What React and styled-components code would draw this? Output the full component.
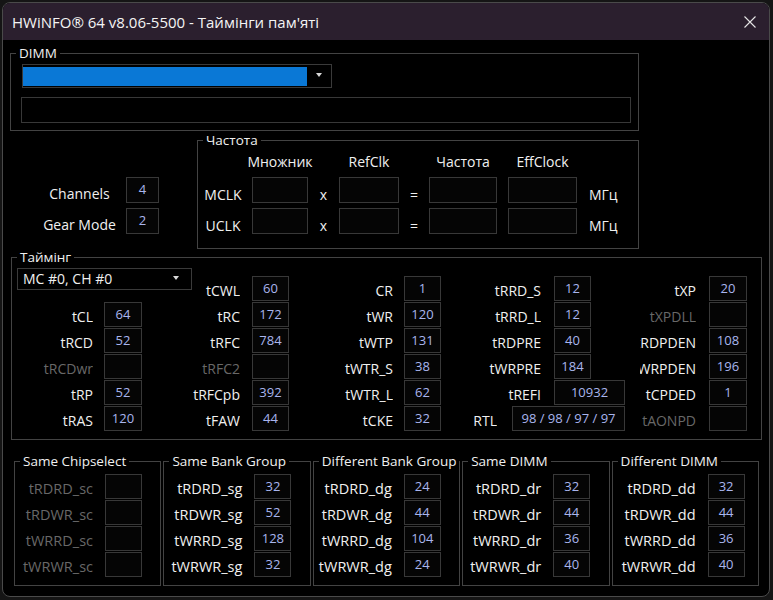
import styled, { createGlobalStyle } from "styled-components";

const GlobalStyle = createGlobalStyle`
  html, body {
    margin: 0;
    padding: 0;
    background: #151515;
  }
  body {
    font-family: "Open Sans", "Noto Sans", sans-serif;
    color: #f0f0f0;
  }
  * {
    box-sizing: border-box;
  }
`;

// top timing block: [label, value, dim, extra]
const timingCols = [
  { labelW: 81, gap: 11, boxW: 38, pad: 0 },
  { labelW: 98, gap: 12, boxW: 37, pad: 0 },
  { labelW: 104, gap: 11, boxW: 37, pad: 0 },
  { labelW: 100, gap: 13, boxW: 37, pad: 0 },
  { labelW: 56, gap: 13, boxW: 38, pad: 15 },
];

const timingRows = [
  [null, ["tCWL", "60"], ["CR", "1"], ["tRRD_S", "12"], ["tXP", "20"]],
  [["tCL", "64"], ["tRC", "172"], ["tWR", "120"], ["tRRD_L", "12"], ["tXPDLL", "", true]],
  [["tRCD", "52"], ["tRFC", "784"], ["tWTP", "131"], ["tRDPRE", "40"], ["tRDPDEN", "108"]],
  [["tRCDwr", "", true], ["tRFC2", "", true], ["tWTR_S", "38"], ["tWRPRE", "184"], ["tWRPDEN", "196"]],
  [["tRP", "52"], ["tRFCpb", "392"], ["tWTR_L", "62"], ["tREFI", "10932", false, { boxW: 71 }], ["tCPDED", "1"]],
  [["tRAS", "120"], ["tFAW", "44"], ["tCKE", "32"], ["RTL", "98 / 98 / 97 / 97", false, { labelW: 56, gap: 15, boxW: 113 }], ["tAONPD", "", true]],
];

const groups = [
  { title: "Same Chipselect", labelW: 78, dim: true, rows: [["tRDRD_sc", ""], ["tRDWR_sc", ""], ["tWRRD_sc", ""], ["tWRWR_sc", ""]] },
  { title: "Same Bank Group", labelW: 78, rows: [["tRDRD_sg", "32"], ["tRDWR_sg", "52"], ["tWRRD_sg", "128"], ["tWRWR_sg", "32"]] },
  { title: "Different Bank Group", labelW: 78, rows: [["tRDRD_dg", "24"], ["tRDWR_dg", "44"], ["tWRRD_dg", "104"], ["tWRWR_dg", "24"]] },
  { title: "Same DIMM", labelW: 78, rows: [["tRDRD_dr", "32"], ["tRDWR_dr", "44"], ["tWRRD_dr", "36"], ["tWRWR_dr", "40"]] },
  { title: "Different DIMM", labelW: 83, rows: [["tRDRD_dd", "32"], ["tRDWR_dd", "44"], ["tWRRD_dd", "36"], ["tWRWR_dd", "40"]] },
];

const DropArrow = () => (
  <svg width="6" height="4" viewBox="0 0 6 4">
    <path d="M0 0 H6 L3 4 Z" fill="#d8d8d8" />
  </svg>
);

export default function App() {
  return (
    <>
      <GlobalStyle />
      <Window>
        <TitleBar>
          <Title>HWiNFO® 64 v8.06-5500 - Таймінги пам'яті</Title>
          <CloseBtn>
            <svg width="12" height="12" viewBox="0 0 12 12">
              <path d="M0.5 0.5 L11.5 11.5 M11.5 0.5 L0.5 11.5" stroke="#e4e4e4" strokeWidth="1.1" />
            </svg>
          </CloseBtn>
        </TitleBar>

        <Body>
          <Group $w={629} $h={86}>
            <Legend>DIMM</Legend>
            <DimmInner>
              <DimmCombo>
                <Selected />
                <ArrowSlot>
                  <DropArrow />
                </ArrowSlot>
              </DimmCombo>
              <TextBox />
            </DimmInner>
          </Group>

          <MidRow>
            <InfoCol>
              <InfoLabel>Channels</InfoLabel>
              <Value $w={33} $h={26}>4</Value>
              <InfoLabel>Gear Mode</InfoLabel>
              <Value $w={33} $h={26}>2</Value>
            </InfoCol>

            <Group $w={442} $h={117}>
              <Legend>Частота</Legend>
              <FreqGrid>
                <HeadText $col={2}>Множник</HeadText>
                <HeadText $col={4}>RefClk</HeadText>
                <HeadText $col={6}>Частота</HeadText>
                <HeadText $col={8}>EffClock</HeadText>
                {["MCLK", "UCLK"].map((name, i) => (
                  <FreqRow key={name} $row={i + 2}>
                    <FreqText $col={1} $center>{name}</FreqText>
                    <FreqBox $col={2} />
                    <FreqText $col={3} $center>x</FreqText>
                    <FreqBox $col={4} />
                    <FreqText $col={5} $center>=</FreqText>
                    <FreqBox $col={6} />
                    <FreqBox $col={8} />
                    <FreqText $col={10}>МГц</FreqText>
                  </FreqRow>
                ))}
              </FreqGrid>
            </Group>
          </MidRow>

          <Group $w={751} $h={191} $ml={1}>
            <Legend>Таймінг</Legend>
            <TimingGrid>
              <McCombo>
                <span>MC #0, CH #0</span>
                <DropArrow />
              </McCombo>
              {timingRows.map((row, r) =>
                row.map((cell, c) => {
                  if (!cell) return null;
                  const [label, value, dim, over] = cell;
                  const col = { ...timingCols[c], ...(over || {}) };
                  return (
                    <TCell key={label} $col={c + 1} $row={r + 2} $pad={col.pad}>
                      <TLabel $w={col.labelW} $gap={col.gap} $dim={dim}>
                        <span>{label}</span>
                      </TLabel>
                      <Value $w={col.boxW} $h={25}>{value}</Value>
                    </TCell>
                  );
                })
              )}
            </TimingGrid>
          </Group>

          <BottomRow>
            {groups.map((g) => (
              <Group key={g.title} $h={133}>
                <Legend>{g.title}</Legend>
                <PairGrid $labelW={g.labelW}>
                  {g.rows.map(([label, value]) => (
                    <Pair key={label}>
                      <PairLabel $dim={g.dim}>{label}</PairLabel>
                      <Value $w={37} $h={25}>{value}</Value>
                    </Pair>
                  ))}
                </PairGrid>
              </Group>
            ))}
          </BottomRow>
        </Body>
      </Window>
    </>
  );
}

const Window = styled.div`
  margin: 2px 0 0 2px;
  width: 768px;
  height: 595px;
  border: 1px solid #4a4a4a;
  border-radius: 8px;
  background: #000;
  overflow: hidden;
  display: flex;
  flex-direction: column;
`;

const TitleBar = styled.div`
  flex: none;
  height: 37px;
  display: flex;
  align-items: center;
  justify-content: space-between;
  background: #2b1f2e;
  padding-left: 9px;
`;

const Title = styled.div`
  font-size: 15px;
  color: #f4f4f4;
  white-space: nowrap;
`;

const CloseBtn = styled.div`
  width: 38px;
  height: 37px;
  display: flex;
  align-items: center;
  justify-content: center;
`;

const Body = styled.div`
  padding: 5px 0 0 7px;
`;

const Group = styled.fieldset`
  margin: 0 0 0 ${(p) => p.$ml || 0}px;
  padding: 0;
  min-width: 0;
  border: 1px solid #434343;
  width: ${(p) => (p.$w ? `${p.$w}px` : "auto")};
  height: ${(p) => p.$h}px;
`;

const Legend = styled.legend`
  margin-left: 5px;
  padding: 0 3px;
  font-size: 13.5px;
  line-height: 16px;
  color: #f0f0f0;
  white-space: nowrap;
`;

const DimmInner = styled.div`
  padding: 3px 0 0 11px;
`;

const DimmCombo = styled.div`
  width: 310px;
  height: 24px;
  border: 1px solid #3a3a3a;
  display: flex;
  padding: 2px 0 1px 0;
`;

const Selected = styled.div`
  width: 284px;
  background: #0a78d6;
`;

const ArrowSlot = styled.div`
  flex: 1;
  display: flex;
  align-items: center;
  justify-content: center;
  padding-bottom: 3px;
`;

const TextBox = styled.div`
  margin: 9px 0 0 -1px;
  width: 610px;
  height: 26px;
  border: 1px solid #383838;
`;

const MidRow = styled.div`
  display: flex;
  margin-top: 1px;
`;

const InfoCol = styled.div`
  width: 187px;
  padding: 45px 0 0 30px;
  display: grid;
  grid-template-columns: 79px 33px;
  grid-auto-rows: 26px;
  column-gap: 7px;
  row-gap: 5px;
  align-content: start;
`;

const InfoLabel = styled.div`
  display: flex;
  align-items: center;
  justify-content: center;
  padding-top: 6px;
  font-size: 14px;
  white-space: nowrap;
`;

const Value = styled.div`
  width: ${(p) => p.$w}px;
  height: ${(p) => p.$h}px;
  flex: none;
  border: 1px solid #383838;
  background: #050505;
  display: flex;
  align-items: center;
  justify-content: center;
  padding-bottom: 2px;
  font-size: 13px;
  color: #a9b5ee;
  white-space: nowrap;
`;

const FreqGrid = styled.div`
  display: grid;
  grid-template-columns: 54px 56px 31px 60px 30px 68px 11px 69px 12px auto;
  grid-template-rows: 26px 29px 31px;
`;

const HeadText = styled.div`
  grid-row: 1;
  grid-column: ${(p) => p.$col};
  display: flex;
  align-items: center;
  justify-content: center;
  font-size: 14px;
  white-space: nowrap;
`;

const FreqRow = styled.div`
  display: contents;
  & > * {
    grid-row: ${(p) => p.$row};
  }
`;

const FreqText = styled.div`
  grid-column: ${(p) => p.$col};
  align-self: end;
  height: 26px;
  display: flex;
  align-items: center;
  justify-content: ${(p) => (p.$center ? "center" : "flex-start")};
  padding-top: 8px;
  padding-right: ${(p) => (p.$col === 1 ? 4 : 0)}px;
  font-size: 14px;
  white-space: nowrap;
`;

const FreqBox = styled.div`
  grid-column: ${(p) => p.$col};
  align-self: end;
  height: 26px;
  border: 1px solid #383838;
  background: #050505;
`;

const TimingGrid = styled.div`
  margin-top: 3px;
  display: grid;
  grid-template-columns: 130px 147px 152px 184px 122px;
  grid-template-rows: 8px repeat(6, 26px);
`;

const McCombo = styled.div`
  grid-column: 1;
  grid-row: 1 / span 2;
  align-self: start;
  width: 175px;
  height: 22px;
  margin-left: 5px;
  border: 1px solid #3a3a3a;
  display: flex;
  align-items: center;
  justify-content: space-between;
  padding: 0 12px 1px 5px;
  font-size: 14px;
  white-space: nowrap;
  svg {
    margin-top: -2px;
  }
`;

const TCell = styled.div`
  grid-column: ${(p) => p.$col};
  grid-row: ${(p) => p.$row};
  display: flex;
  align-items: flex-start;
  padding-left: ${(p) => p.$pad}px;
`;

const TLabel = styled.div`
  width: ${(p) => p.$w}px;
  margin-right: ${(p) => p.$gap}px;
  height: 25px;
  flex: none;
  display: flex;
  justify-content: flex-end;
  align-items: center;
  padding-top: 3px;
  overflow: hidden;
  white-space: nowrap;
  font-size: 14px;
  color: ${(p) => (p.$dim ? "#686868" : "#f0f0f0")};
  span {
    flex: none;
  }
`;

const BottomRow = styled.div`
  margin: 13px 0 0 4px;
  width: 745px;
  display: grid;
  grid-template-columns: repeat(5, 1fr);
  column-gap: 2px;
`;

const PairGrid = styled.div`
  padding-top: 5px;
  display: grid;
  grid-template-columns: ${(p) => p.$labelW}px 37px;
  grid-auto-rows: 25px;
  column-gap: 12px;
  row-gap: 1px;
`;

const Pair = styled.div`
  display: contents;
`;

const PairLabel = styled.div`
  display: flex;
  justify-content: flex-end;
  align-items: center;
  padding-top: 3px;
  font-size: 14.5px;
  white-space: nowrap;
  color: ${(p) => (p.$dim ? "#686868" : "#f0f0f0")};
`;
